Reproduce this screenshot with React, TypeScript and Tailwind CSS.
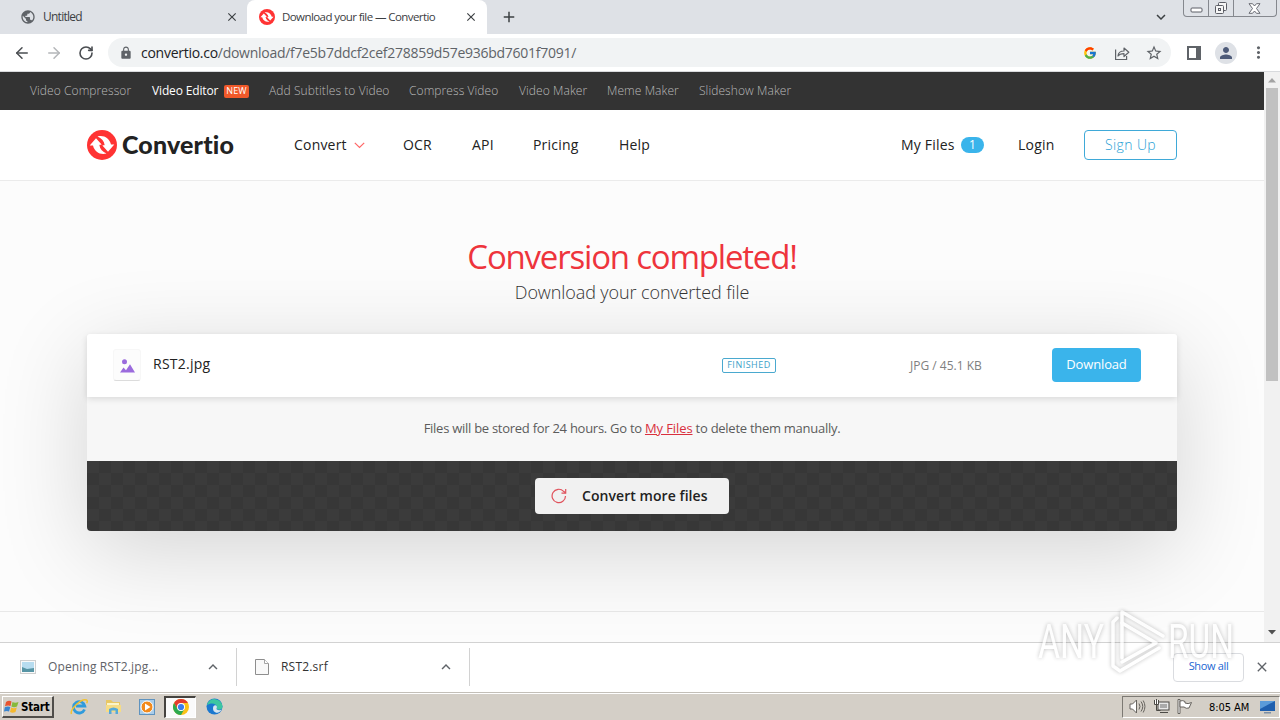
import type { ReactNode } from "react";
import { ArrowLeft, ArrowRight, RotateCw } from "lucide-react";
import { MdLock, MdStarOutline, MdPerson, MdMoreVert, MdExpandLess, MdExpandMore, MdClose, MdAdd, MdPublic } from "react-icons/md";
import { FcGoogle } from "react-icons/fc";

function Mark({ size }: { size: number }) {
  return (
    <svg width={size} height={size} viewBox="0 0 30 30" className="shrink-0">
      <circle cx="15" cy="15" r="15" fill="#ff3333" />
      <path d="M10.500 6.500c6-1.800 12 1.500 13.500 8h3.300l-6.300 7.200-6.500-7.200h3c-.6-3.600-3-6.200-7-8z" fill="#fff" />
      <path d="M19.500 23.500c-6 1.800-12-1.500-13.500-8H2.700L9 8.300l6.500 7.200h-3c.6 3.600 3 6.200 7 8z" fill="#fff" />
      <path d="M14 10.500q2.300 2 2.700 4h-2.200M16 19.500q-2.300-2-2.700-4h2.200" fill="none" stroke="#ff3333" strokeWidth="1.300" />
    </svg>
  );
}

function Tabs() {
  return (
    <div className="flex h-[34px] shrink-0 bg-[#dee1e6] text-[12px] text-[#3c4043]">
      <div className="flex w-[247px] items-center pl-[20px] pr-[8px]">
        <MdPublic size={16} className="text-[#5f6368]" />
        <span className="ml-[7px] tracking-[-0.75px]">Untitled</span>
        <MdClose size={14} stroke="currentColor" className="ml-auto text-[#3c4043]" />
      </div>
      <div className="flex w-[240px] items-center rounded-t-[8px] bg-white pl-[12px] pr-[9px]">
        <Mark size={16} />
        <span className="ml-[7px] text-[11.500px] whitespace-nowrap tracking-[-0.58px]">Download your file — Convertio</span>
        <MdClose size={14} stroke="currentColor" className="ml-auto text-[#3c4043]" />
      </div>
      <div className="flex items-center pl-[13px]">
        <MdAdd size={18} className="text-[#3c4043]" />
      </div>
      <div className="ml-auto flex items-center">
        <MdExpandMore size={18} className="mr-[13px] text-[#3c4043]" />
        <div className="flex h-[17px] w-[94px] self-start rounded-b-[4px] border border-t-0 border-[#85888e] bg-[#dfe2e7]">
          <div className="flex w-[25px] items-center justify-center border-r border-[#85888e]">
            <svg width="13" height="6" viewBox="0 0 13 6" className="mt-[4px]"><rect x="1" y="1" width="11" height="4" rx="1" fill="#fff" stroke="#5c5e66" /></svg>
          </div>
          <div className="flex w-[25px] items-center justify-center border-r border-[#85888e]">
            <svg width="14" height="14" viewBox="0 0 14 14" fill="#f6f6f6" stroke="#5c5e66"><rect x="4.500" y="1.500" width="8" height="8" rx="1" /><rect x="1.500" y="4.500" width="8" height="8" rx="1" /><rect x="4.500" y="7.500" width="2" height="2" /></svg>
          </div>
          <div className="flex flex-1 items-center justify-center">
            <svg width="13" height="11" viewBox="0 0 13 11" fill="#fff" stroke="#5c5e66" strokeWidth="0.900" className="mr-[2px]"><path d="M1 .7h3.500L6.500 3l2-2.300H12L8.500 5.500l3.500 4.800H8.500L6.500 8l-2 2.300H1l3.500-4.800z" /></svg>
          </div>
        </div>
        <div className="w-[3px]" />
      </div>
    </div>
  );
}

function Toolbar() {
  return (
    <div className="flex h-[38px] shrink-0 items-center border-b border-[#d8dadd] bg-white pl-[13px] text-[#5f6368]">
      <ArrowLeft size={18} className="text-[#4a4d51]" />
      <ArrowRight size={18} className="ml-[14px] text-[#b4b6b9]" />
      <RotateCw size={16} strokeWidth={2.400} className="ml-[15px] text-[#4a4d51]" />
      <div className="ml-[14px] flex h-[29px] w-[1063px] items-center rounded-full bg-[#f1f3f4] pl-[11px]">
        <MdLock size={14} />
        <span className="ml-[8px] whitespace-nowrap text-[14px] tracking-[-0.27px]">
          <span className="text-[#202124]">convertio.co</span>/download/f7e5b7ddcf2cef278859d57e936bd7601f7091/
        </span>
        <FcGoogle size={14} className="ml-auto" />
        <svg width="16" height="16" viewBox="0 0 16 16" fill="none" stroke="#5f6368" strokeWidth="1.200" className="ml-[17px]">
          <path d="M1.600 4.500v10h11v-3.500" />
          <path d="M4 11c.3-3.500 2.200-5 6-5V3l4.800 4.300L10 11.500V8.700c-3 0-4.800.6-6 2.300z" strokeLinejoin="round" />
        </svg>
        <MdStarOutline size={18} className="ml-[15px] mr-[8px]" />
      </div>
      <svg width="14" height="14" viewBox="0 0 14 14" className="ml-[16px]"><path d="M0 0h14v14H0zM2 2v10h7V2z" fill="#5f6368" fillRule="evenodd" /></svg>
      <div className="ml-[14px] flex size-[22px] items-center justify-center rounded-full bg-[#dee1e6]">
        <MdPerson size={18} className="text-[#4d5a78]" />
      </div>
      <MdMoreVert size={19} className="ml-[12px]" />
    </div>
  );
}

function TopLinks() {
  return (
    <div className="flex h-[38px] shrink-0 items-center bg-[#333] pl-[30px] text-[12px] font-light tracking-[0.08px] whitespace-nowrap text-[#bababa]">
      <span className="w-[122px]">Video Compressor</span>
      <span className="w-[72px] font-normal tracking-[-0.15px] text-white">Video Editor</span>
      <span className="mr-[20px] flex h-[13px] w-[25px] items-center justify-center rounded-[2px] bg-[#f1592a] text-[9px] font-normal text-white">NEW</span>
      <span className="w-[140px]">Add Subtitles to Video</span>
      <span className="w-[110px]">Compress Video</span>
      <span className="w-[88px]">Video Maker</span>
      <span className="w-[92px]">Meme Maker</span>
      <span>Slideshow Maker</span>
    </div>
  );
}

function Header() {
  return (
    <div className="flex h-[71px] shrink-0 items-center border-b border-[#ebebeb] bg-white pl-[87px] text-[14px] leading-[20px] tracking-[0.2px] whitespace-nowrap text-[#222]">
      <Mark size={30} />
      <span className="mb-[2px] ml-[5px] w-[172px] font-[Lato] text-[25px] font-black tracking-[0.15px]">Convertio</span>
      <span className="w-[52px]">Convert</span>
      <svg width="11" height="7" viewBox="0 0 11 7" fill="none" stroke="#f66" strokeWidth="1.200" className="mt-px ml-[8px] mr-[38px]"><path d="M.8.8l4.700 4.700L10.200.8" /></svg>
      <span className="w-[69px]">OCR</span>
      <span className="w-[61px]">API</span>
      <span className="w-[86px]">Pricing</span>
      <span className="w-[282px]">Help</span>
      <span className="w-[60px]">My Files</span>
      <span className="mr-[34px] flex h-[16px] w-[23px] items-center justify-center rounded-full bg-[#3ab4eb] text-[12px] text-white">1</span>
      <span className="w-[66px]">Login</span>
      <span className="flex h-[30px] w-[93px] items-center justify-center rounded-[4px] border border-[#3fa9d8] font-light tracking-[0.4px] text-[#2a9fd6]">Sign Up</span>
    </div>
  );
}

function Card() {
  return (
    <div className="mt-[28px] ml-[87px] w-[1090px] rounded-[4px] shadow-[0_20px_90px_rgba(0,0,0,0.16)]">
      <div className="relative flex h-[63px] items-center rounded-t-[3px] bg-white pl-[26px] pb-[2px] shadow-[0_2px_6px_rgba(0,0,0,0.12)]">
        <div className="flex h-[32px] w-[28px] items-center justify-center rounded-[3px] border border-[#f7f7f7] border-b-[#dcdcdc] bg-[#fcfcfc]">
          <svg width="15" height="14" viewBox="0 0 15 14" fill="#9b6bdd" className="mt-[2px]"><circle cx="4.500" cy="2.800" r="2.500" /><path d="M0 13.500l3.500-5 2.500 2.700 4-6 5 8.300z" /></svg>
        </div>
        <span className="mb-[2px] ml-[12px] w-[569px] text-[14px] tracking-[0.25px] text-[#222]">RST2.jpg</span>
        <span className="mt-px flex h-[15px] w-[54px] items-center justify-center rounded-[2px] border border-[#4aa9cf] text-[9px] tracking-[0.5px] text-[#3d9fc8]">FINISHED</span>
        <span className="mt-[3px] ml-[134px] w-[142px] text-[12px] whitespace-nowrap text-[#808080]">JPG / 45.1 KB</span>
        <span className="flex h-[34px] w-[89px] items-center justify-center rounded-[4px] bg-[#3ab4eb] text-[13px] tracking-[-0.15px] text-white">Download</span>
      </div>
      <div className="flex h-[64px] items-center justify-center bg-[#f7f7f7] text-[13px] tracking-[-0.27px] whitespace-nowrap text-[#5c5c5c]">
        <span>Files will be stored for 24 hours. Go to <span className="tracking-[-0.1px] text-[#d9303e] underline">My Files</span> to delete them manually.</span>
      </div>
      <div className="flex h-[70px] items-center justify-center rounded-b-[4px] bg-[repeating-conic-gradient(#373737_0_25%,#3b3b3b_0_50%)] bg-[length:24px_24px]">
        <div className="flex h-[36px] w-[194px] items-center rounded-[4px] bg-[#f1f1f1] pl-[16px] text-[14px] font-semibold tracking-[0.06px] whitespace-nowrap text-[#222]">
          <svg width="16" height="16" viewBox="0 0 16 16" fill="none" stroke="#e0525c" strokeWidth="1.200"><path d="M14.500 8a6.700 6.700 0 1 1-1.900-4.700L14.500 5" /><path d="M14.700 1v4.200h-4.200" /></svg>
          <span className="mb-px ml-[15px]">Convert more files</span>
        </div>
      </div>
    </div>
  );
}

function ScrollBar() {
  return (
    <div className="flex w-[16px] flex-col items-center bg-[#f1f1f1]">
      <svg width="8" height="5" viewBox="0 0 8 5" className="mt-[6px]"><path d="M0 4.500h8L4 0z" fill="#a3a3a3" /></svg>
      <div className="mt-[5px] h-[293px] w-[12px] bg-[#c1c1c1]" />
      <svg width="8" height="5" viewBox="0 0 8 5" className="mt-auto mb-[7px]"><path d="M0 0h8L4 4.500z" fill="#505050" /></svg>
    </div>
  );
}

function Downloads() {
  return (
    <div className="flex h-[50px] shrink-0 items-center border-t border-[#d2d2d2] bg-white pb-px text-[12px] whitespace-nowrap text-[#5f6368]">
      <div className="flex h-[38px] w-[237px] items-center border-r border-[#d2d2d2] pl-[20px]">
        <svg width="16" height="14" viewBox="0 0 16 14"><rect x=".5" y=".5" width="15" height="13" fill="#fafafa" stroke="#cfcfcf" /><rect x="2" y="2" width="12" height="10" fill="#b7dcef" /><path d="M2 7l5 2 7-1v4H2z" fill="#5795a5" /></svg>
        <span className="ml-[12px] tracking-[0.13px]">Opening RST2.jpg...</span>
        <MdExpandLess size={18} className="mr-[14px] ml-auto" />
      </div>
      <div className="flex h-[38px] w-[233px] items-center border-r border-[#d2d2d2] pl-[18px]">
        <svg width="14" height="16" viewBox="0 0 14 16"><path d="M.5.500h9L13.500 4.500v11H.5z" fill="#f9f9f9" stroke="#8e8e8e" /><path d="M9.500.5v4h4" fill="#fff" stroke="#a5a5a5" /></svg>
        <span className="ml-[12px] tracking-[0.2px] text-[#333]">RST2.srf</span>
        <MdExpandLess size={18} className="mr-[14px] ml-auto" />
      </div>
      <div className="ml-auto flex h-[29px] w-[71px] items-center justify-center rounded-[4px] border border-[#dadce0] pb-px text-[11px] tracking-[-0.35px] text-[#1a66d2]">Show all</div>
      <MdClose size={16} className="mr-[10px] ml-[10px]" />
    </div>
  );
}

function TaskIcon({ children }: { children: ReactNode }) {
  return <div className="flex w-[34px] items-center justify-center">{children}</div>;
}

function Taskbar() {
  return (
    <div className="flex h-[28px] shrink-0 items-center border-t border-[#c3bfb8] bg-[#d4cfc7] pl-[2px] shadow-[inset_0_1px_0_#fff]">
      <div className="mt-px flex h-[22px] w-[52px] items-center border-t border-r-2 border-b-2 border-l border-t-white border-r-[#504e4a] border-b-[#504e4a] border-l-white pl-px">
        <svg width="16" height="16" viewBox="0 0 16 16"><path d="M2 3q3-2 5.500-.5L6.500 7Q4 5.800 1 7.300z" fill="#e8542f" /><path d="M8.500 3q2.500 1.500 6 0L13 7.500q-3 1.400-5.600 0z" fill="#86b93b" /><path d="M.8 8.300q3-1.500 5.500-.3L5 12.500Q3 11.500 0 12.500z" fill="#3a85cf" /><path d="M7.200 8.500q2.500 1.500 5.600.1L11.500 13q-3 1.500-5.500 0z" fill="#f5b92f" /></svg>
        <span className="mt-[2px] ml-px font-['DejaVu_Sans_Condensed','DejaVu_Sans',sans-serif] text-[11.500px] font-bold tracking-[-0.200px] text-black">Start</span>
      </div>
      <div className="ml-[8px] flex h-full items-center">
        <TaskIcon>
          <svg width="18" height="18" viewBox="0 0 18 18" fill="none"><path d="M14.500 11.500a5.700 5.700 0 1 1 .3-3.500H6" stroke="#2f9bdc" strokeWidth="2.800" /><path d="M1.500 16C-.5 12 11 0 16.500 2c1 .5.800 2 .2 3.300" stroke="#f2c230" strokeWidth="1.500" /></svg>
        </TaskIcon>
        <TaskIcon>
          <svg width="17" height="17" viewBox="0 0 17 17"><path d="M1 2h5l2 2h7v10H1z" fill="#e8c764" /><path d="M2 5h12v3H2z" fill="#fbf4c8" /><path d="M1 7h15v7H1z" fill="#f6dc85" /><path d="M4 16v-5q4.500-3 9 0v5h-2.500v-3.500h-4V16z" fill="#55a9d8" /></svg>
        </TaskIcon>
        <TaskIcon>
          <svg width="16" height="16" viewBox="0 0 16 16"><rect x=".5" y=".5" width="15" height="15" fill="#a9cdea" stroke="#5f93bf" /><circle cx="8" cy="8" r="6" fill="#f28a1c" stroke="#fff" /><path d="M6 4.500v7L11.500 8z" fill="#fff" /></svg>
        </TaskIcon>
        <div className="flex h-[22px] w-[32px] items-center justify-center border-t-2 border-l-2 border-r border-b border-t-[#45433f] border-r-white border-b-white border-l-[#45433f] bg-[#fafafa]">
          <svg width="16" height="16" viewBox="0 0 16 16"><circle cx="8" cy="8" r="8" fill="#fbc116" /><path d="M1.070 4A8 8 0 0 1 14.930 4H8L4.540 10z" fill="#e33b2e" /><path d="M1.070 4A8 8 0 0 0 8 16l3.460-6H4.540z" fill="#2da94f" /><circle cx="8" cy="8" r="4" fill="#fff" /><circle cx="8" cy="8" r="3.100" fill="#3b7ded" /></svg>
        </div>
        <div className="ml-px flex"><TaskIcon>
          <svg width="17" height="17" viewBox="0 0 17 17"><circle cx="8.500" cy="8.500" r="8" fill="#1b78cf" /><path d="M.8 7A8 8 0 0 1 16.500 8.500c0 3-2.500 3.500-5 3-1.500-.5-.5-1.500-.6-2.700C10.500 5.500 5.500 4 .8 7z" fill="#3dc6a1" /><path d="M7 10.500c0-2 1-3.200 2.300-3.200 1.200 0 1.800 1 1.600 2-.1.900-.8 1.500 0 2.200 1.300 1 3.300.9 4.700.1-1.500 2.500-3.600 3.600-5.400 3.100-2-.5-3.200-2.200-3.200-4.200z" fill="#d8e6ef" /></svg>
        </TaskIcon></div>
      </div>
      <div className="ml-auto flex h-[22px] w-[158px] items-center border border-t-[#7c7973] border-r-white border-b-white border-l-[#7c7973] pl-[6px]">
        <svg width="17" height="15" viewBox="0 0 17 15" fill="none" stroke="#66635e"><path d="M1 5h2.500L7.500 1v13L3.500 10H1z" fill="#fff" /><path d="M10 4.500q2 3 0 6M12 2.500q3.500 5 0 10M14.200 1.500q3.500 6 0 12" /></svg>
        <svg width="17" height="15" viewBox="0 0 17 15" className="ml-[7px]" stroke="#4c4a46"><rect x="5" y="3" width="11" height="8" fill="#e9e9e9" /><rect x="7" y="5" width="7" height="4" fill="#aaa" stroke="none" /><path d="M7 13.500h8M3.500 6v5.500h4" fill="none" /><path d="M1.500 1v4.500h4V1M3.500 0v5" fill="#fff" /></svg>
        <svg width="16" height="15" viewBox="0 0 16 15" className="ml-[7px]" stroke="#66635e" fill="#fff"><path d="M1 .5h2v14H1z" /><path d="M3 2q3-1 5 .5V4q3 1.500 6.500-.5L12 9q-3 1-5-1H3z" /></svg>
        <span className="mt-[3px] ml-[16px] w-[51px] font-['DejaVu_Sans_Condensed','DejaVu_Sans',sans-serif] text-[11px] tracking-[-0.050px] whitespace-nowrap text-black">8:05 AM</span>
        <svg width="15" height="14" viewBox="0 0 15 14"><path d="M0 1h15v10H0z" fill="#1f5fae" /><path d="M0 1h15L0 9z" fill="#5b9bd9" /><path d="M4 12h7v1.500H4z" fill="#7b8ea5" /></svg>
      </div>
    </div>
  );
}

function Watermark() {
  return (
    <svg width="206" height="72" viewBox="0 0 206 72" className="pointer-events-none absolute top-[606px] left-[1036px] opacity-70 drop-shadow-[0_0_2px_rgba(0,0,0,0.35)]">
      <g fill="#fff" fontFamily="Roboto, sans-serif" fontSize="48">
        <text x="2" y="52" textLength="66" lengthAdjust="spacingAndGlyphs">ANY</text>
        <text x="132" y="52" textLength="66" lengthAdjust="spacingAndGlyphs">RUN</text>
      </g>
      <g fill="none" stroke="#fff" strokeWidth="3.500" strokeLinejoin="round" strokeLinecap="round">
        <path d="M86 52V6l41 24" />
        <path d="M86 17l34 20-34 19" />
        <path d="M81 12l-4 4v44l7 5 39-23" />
      </g>
    </svg>
  );
}

export default function App() {
  return (
    <div className="relative flex h-[720px] w-[1280px] flex-col overflow-hidden bg-white font-['Open_Sans','Noto_Sans',sans-serif]">
      <Tabs />
      <Toolbar />
      <div className="flex h-[570px] shrink-0">
        <div className="flex w-[1264px] flex-col overflow-hidden bg-[#fcfcfc]">
          <TopLinks />
          <Header />
          <div className="h-[431px] shrink-0 border-b border-[#e8e8e8] pt-[53px]">
            <h1 className="text-center text-[33px] leading-[46px] tracking-[-1.2px] text-[#ee343c]">Conversion completed!</h1>
            <p className="-mt-px text-center text-[18px] leading-[27px] font-light tracking-[-0.1px] text-[#333]">Download your converted file</p>
            <Card />
          </div>
        </div>
        <ScrollBar />
      </div>
      <Downloads />
      <Taskbar />
      <Watermark />
    </div>
  );
}
